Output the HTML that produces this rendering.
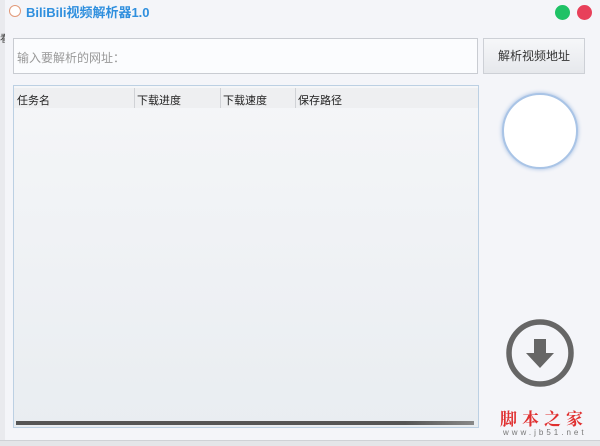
<!DOCTYPE html><html><head><meta charset="utf-8"><style>
body{margin:0;width:600px;height:445px;background:#f4f5f9;position:relative;overflow:hidden;font-family:"Liberation Sans","Noto Sans CJK SC",sans-serif;font-size:12px;color:#222}
.a{position:absolute}
</style></head><body>
<div class="a" style="left:0;top:0;width:5px;height:445px;background:#e9eaee;border-right:1px solid #d6d8dc"></div>
<div class="a" style="left:0;top:30px;font-size:10px;color:#444">看</div>
<div class="a" style="left:0;top:440px;width:600px;height:5px;background:#e4e5e8;border-top:1px solid #cfd1d5"></div>
<div class="a" style="left:5px;top:0;width:595px;height:440px;background:#f4f5f9"></div>
<div class="a" style="left:9px;top:5px;width:10px;height:10px;border:1px solid #e29a7a;border-radius:50%;background:#fff"></div>
<div class="a" style="left:26px;top:2px;font-size:13px;font-weight:bold;color:#2f8fde">BiliBili视频解析器1.0</div>
<div class="a" style="left:555px;top:5px;width:15px;height:15px;border-radius:50%;background:#1fc266"></div>
<div class="a" style="left:577px;top:5px;width:15px;height:15px;border-radius:50%;background:#e8405a"></div>
<div class="a" style="left:13px;top:38px;width:465px;height:36px;background:#fbfcfe;border:1px solid #c9ccd2;box-sizing:border-box"></div>
<div class="a" style="left:17px;top:49px;color:#999">输入要解析的网址：</div>
<div class="a" style="left:483px;top:38px;width:102px;height:36px;background:linear-gradient(#f6f7f9,#e6e8ec);border:1px solid #cdd0d6;box-sizing:border-box;text-align:center;line-height:34px;color:#333">解析视频地址</div>
<div class="a" style="left:13px;top:85px;width:466px;height:343px;background:linear-gradient(#f5f6f8,#e9edf1);border:1px solid #bcd0e3;box-sizing:border-box"></div>
<div class="a" style="left:14px;top:88px;width:464px;height:20px;background:#eeeff1"></div>
<div class="a" style="left:17px;top:92px;font-size:11px">任务名</div>
<div class="a" style="left:134px;top:88px;width:1px;height:20px;background:#d0d2d6"></div>
<div class="a" style="left:137px;top:92px;font-size:11px">下载进度</div>
<div class="a" style="left:220px;top:88px;width:1px;height:20px;background:#d0d2d6"></div>
<div class="a" style="left:223px;top:92px;font-size:11px">下载速度</div>
<div class="a" style="left:295px;top:88px;width:1px;height:20px;background:#d0d2d6"></div>
<div class="a" style="left:298px;top:92px;font-size:11px">保存路径</div>
<div class="a" style="left:16px;top:421px;width:458px;height:4px;background:linear-gradient(90deg,#555 0,#555 85%,#888 100%)"></div>
<div class="a" style="left:502px;top:93px;width:76px;height:76px;border-radius:50%;background:#fff;border:2px solid #a9c4e6;box-shadow:0 0 4px #9bb8e0;box-sizing:border-box"></div>
<svg class="a" style="left:505px;top:318px" width="70" height="70" viewBox="0 0 70 70"><circle cx="35" cy="35" r="31" fill="none" stroke="#666" stroke-width="5.5"/><path d="M29 21h12v14h8L35 50 21 35h8z" fill="#666"/></svg>
<div class="a" style="left:500px;top:405px;font-size:17px;font-weight:bold;color:#e03030;letter-spacing:5px;font-family:'Noto Serif CJK SC',serif">脚本之家</div>
<div class="a" style="left:503px;top:428px;font-size:8px;color:#777;letter-spacing:3px">www.jb51.net</div>
</body></html>
